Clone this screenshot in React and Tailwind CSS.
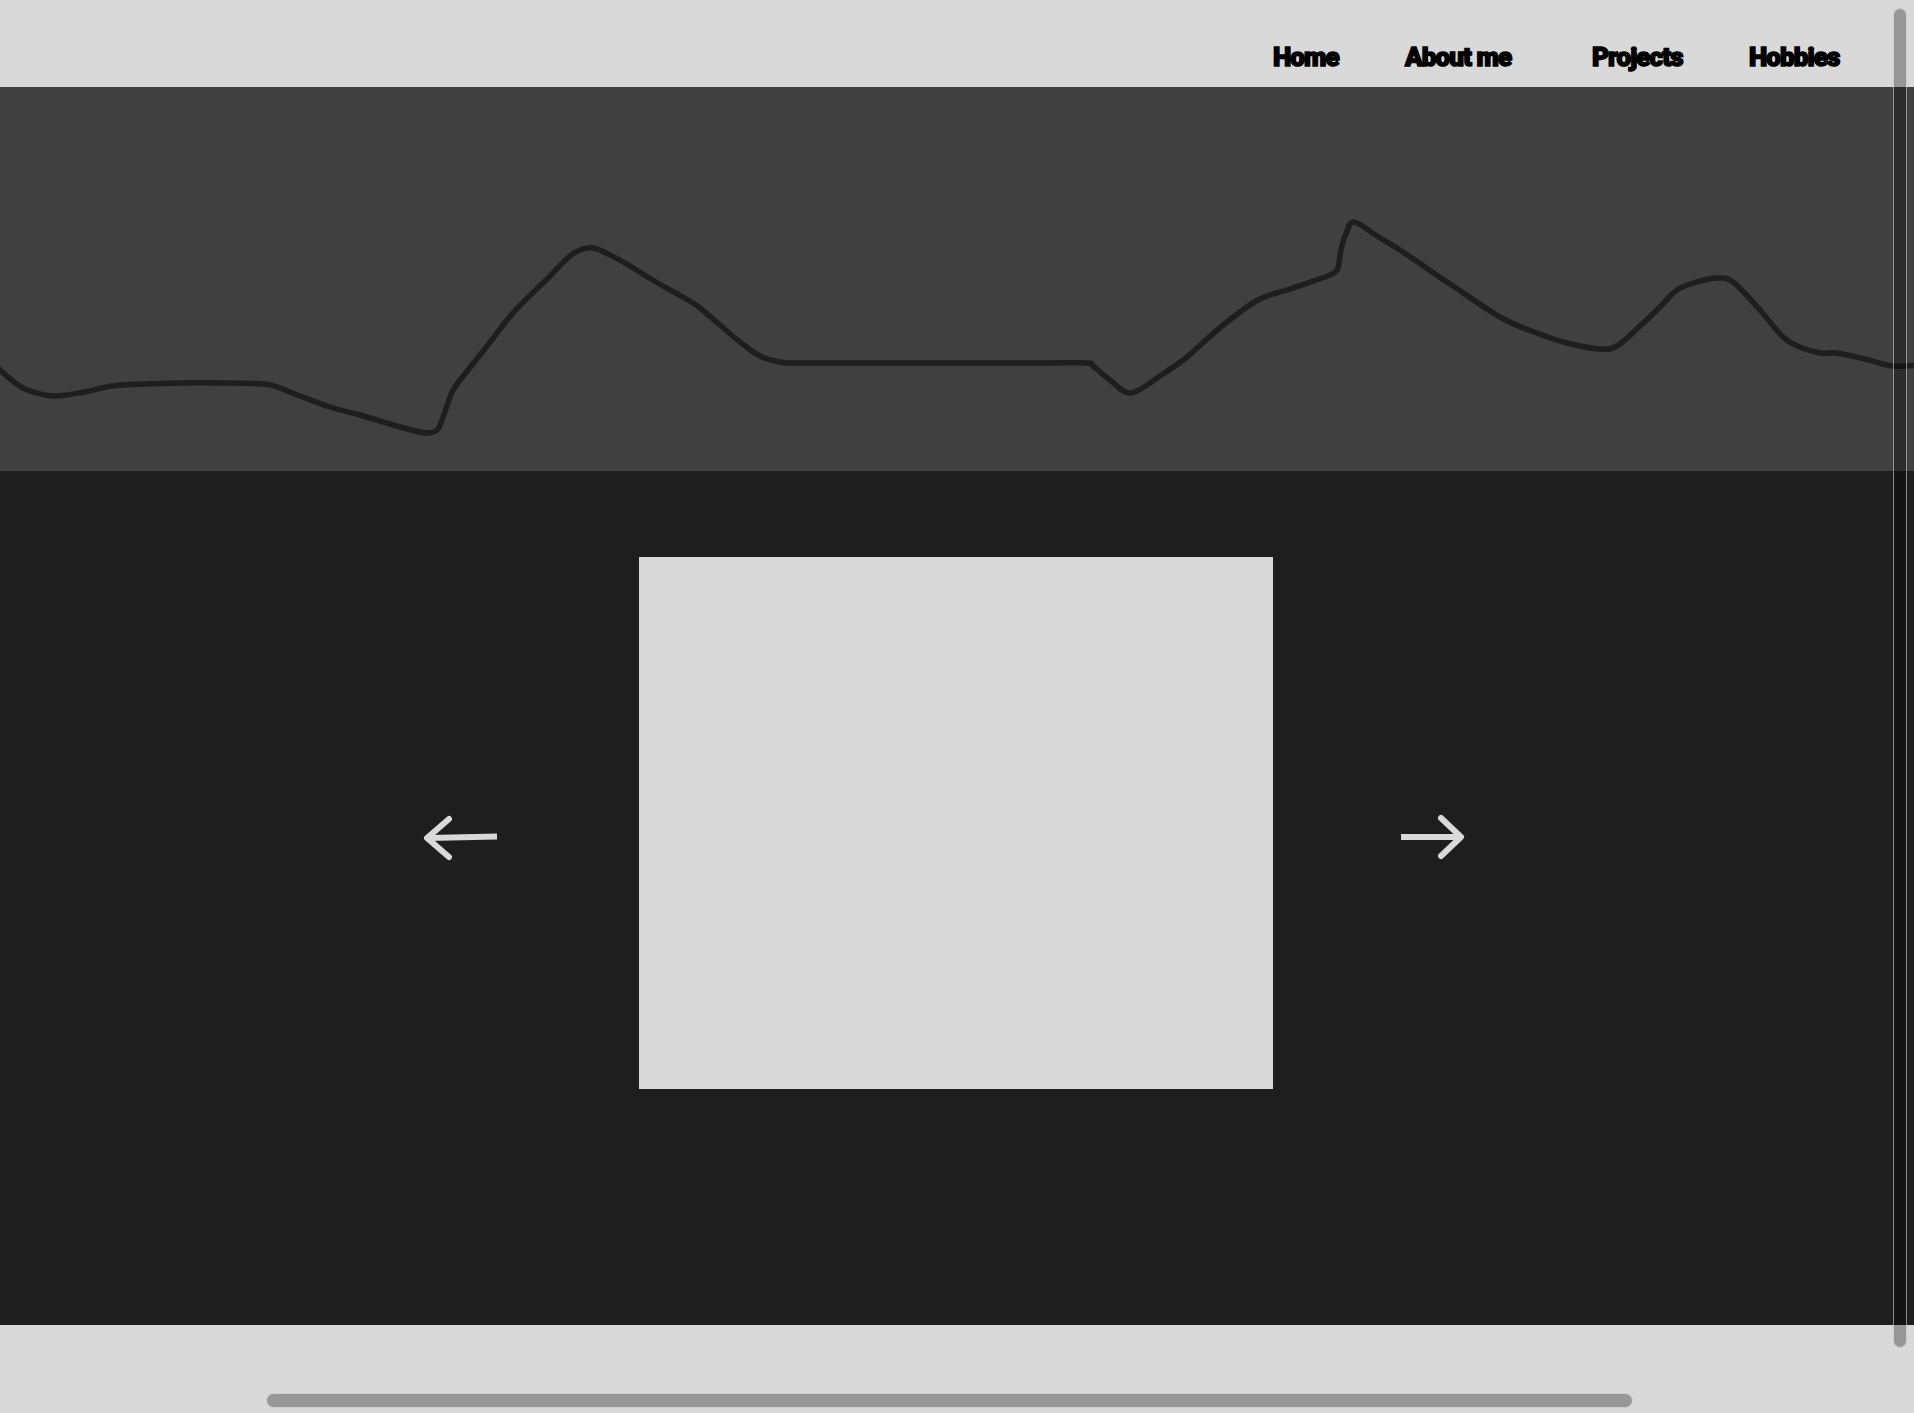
const WAVE = [
  [-4, 364], [0, 370], [14, 382], [27, 390], [54, 396], [84, 392], [112, 386],
  [145, 384], [179, 383], [220, 383], [263, 384], [277, 387], [300, 396],
  [330, 407], [360, 415], [390, 424], [415, 431], [428, 433], [437, 430],
  [442, 420], [448, 403], [455, 387], [484, 350], [513, 313], [548, 278],
  [570, 256], [583, 249], [594, 248], [610, 255], [625, 263], [656, 282],
  [688, 300], [700, 308], [720, 325], [740, 342], [760, 356], [780, 362],
  [798, 363], [850, 363], [920, 363], [990, 363], [1050, 363], [1088, 363],
  [1093, 366], [1110, 380], [1131, 393], [1160, 376], [1187, 357],
  [1222, 326], [1258, 300], [1290, 289], [1325, 277], [1334, 273],
  [1338, 268], [1341, 250], [1346, 234], [1354, 222], [1377, 236],
  [1400, 250], [1450, 284], [1500, 317], [1534, 332], [1567, 343],
  [1600, 349], [1617, 346], [1640, 326], [1660, 307], [1677, 290],
  [1697, 282], [1717, 278], [1733, 282], [1760, 310], [1783, 337],
  [1800, 347], [1820, 353], [1837, 353], [1865, 359], [1893, 366], [1920, 365],
];

// catmull-rom -> cubic bezier
function smooth(pts) {
  let d = `M${pts[0][0]} ${pts[0][1]}`;
  for (let i = 0; i < pts.length - 1; i++) {
    const p0 = pts[i - 1] || pts[i];
    const p1 = pts[i];
    const p2 = pts[i + 1];
    const p3 = pts[i + 2] || p2;
    const c1x = p1[0] + (p2[0] - p0[0]) / 6;
    const c1y = p1[1] + (p2[1] - p0[1]) / 6;
    const c2x = p2[0] - (p3[0] - p1[0]) / 6;
    const c2y = p2[1] - (p3[1] - p1[1]) / 6;
    d += ` C${c1x.toFixed(1)} ${c1y.toFixed(1)} ${c2x.toFixed(1)} ${c2y.toFixed(1)} ${p2[0]} ${p2[1]}`;
  }
  return d;
}

const NAV = [
  { label: "Home", w: "w-[132px]" },
  { label: "About me", w: "w-[187px]" },
  { label: "Projects", w: "w-[157px]" },
  { label: "Hobbies", w: "w-[120px]" },
];

export default function App() {
  return (
    <div className="relative h-[1413px] w-full overflow-hidden bg-[#d9d9d9] font-['Roboto',sans-serif]">
      {/* Top nav */}
      <header className="flex h-[87px] bg-[#d9d9d9] pl-[1273px] pt-[44px]">
        {NAV.map((n) => (
          <a
            key={n.label}
            className={`${n.w} shrink-0 whitespace-nowrap text-[26px] leading-none font-black tracking-[-0.035em] text-black [-webkit-text-stroke:1.5px_black]`}
          >
            {n.label}
          </a>
        ))}
      </header>

      {/* Wave band */}
      <section className="h-[384px] bg-[#404040]">
        <svg width="1914" height="384" viewBox="0 87 1914 384" className="block">
          <path
            d={smooth(WAVE)}
            fill="none"
            stroke="#1e1e1e"
            strokeWidth="5.5"
            strokeLinecap="round"
            strokeLinejoin="round"
          />
        </svg>
      </section>

      {/* Carousel */}
      <section className="flex h-[854px] items-start bg-[#1e1e1e] pt-[86px]">
        <svg width="84" height="48" viewBox="0 0 84 48" className="ml-[420px] mt-[257px] shrink-0">
          <path d="M9 24 L77 22.5" stroke="#d9d9d9" strokeWidth="6" fill="none" />
          <path d="M29 5 L7 24 L29 43" stroke="#d9d9d9" strokeWidth="6" fill="none" strokeLinecap="round" strokeLinejoin="round" />
        </svg>
        <div className="ml-[135px] h-[532px] w-[634px] shrink-0 bg-[#d9d9d9]" />
        <svg width="72" height="48" viewBox="0 0 72 48" className="ml-[124px] mt-[257px] shrink-0">
          <path d="M4 23 L63 23" stroke="#d9d9d9" strokeWidth="6" fill="none" />
          <path d="M44 4 L64 23 L44 42" stroke="#d9d9d9" strokeWidth="6" fill="none" strokeLinecap="round" strokeLinejoin="round" />
        </svg>
      </section>

      <footer className="h-[88px] bg-[#d9d9d9]" />

      {/* drawn scrollbars */}
      <div className="absolute left-[1893px] top-[8px] h-[1340px] w-[14px] rounded-full border border-white/50 bg-black/30" />
      <div className="absolute left-[266px] top-[1393px] h-[15px] w-[1367px] rounded-full border border-white/50 bg-black/30" />
    </div>
  );
}
